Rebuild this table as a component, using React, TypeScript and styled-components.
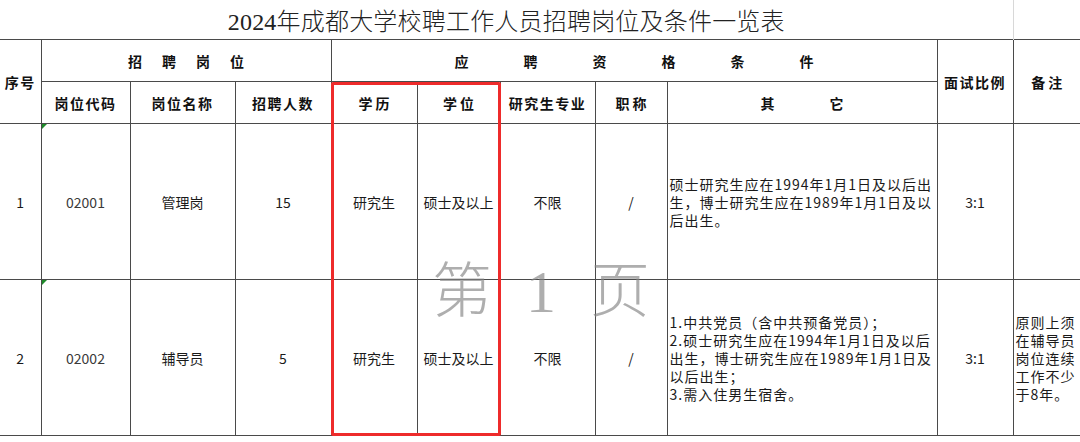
import styled, {createGlobalStyle} from 'styled-components'

const GlobalStyle = createGlobalStyle`
  html, body {
    margin: 0;
    background: #fff;
  }
  body {
    font-family: 'Noto Sans CJK SC', 'Liberation Sans', sans-serif;
    color: #1a1a1a;
  }
`

const LINE = '#4a4a4a'

export const Sheet = styled.div`
  position: relative;
  width: 1080px;
  height: 442px;
  overflow: hidden;
`

export const Grid = styled.table`
  width: 1080px;
  border-collapse: collapse;
  table-layout: fixed;
`

export const TitleCell = styled.td`
  height: 39px;
  padding: 0;
  text-align: center;
  vertical-align: middle;
  font-family: 'Liberation Serif', 'Noto Sans CJK SC', serif;
  font-size: 24px;
  font-weight: 300;
  color: #222;
  letter-spacing: 0.2px;
`

export const TitleSpare = styled.td`
  border-left: 1px solid #d8d8d8;
  padding: 0;
`

export const HeadCell = styled.th<{$spread?: number}>`
  height: 41px;
  padding: 0;
  border: 1px solid ${LINE};
  font-size: 14px;
  font-weight: 700;
  color: #111;
  text-align: center;
  vertical-align: middle;
  letter-spacing: ${p => (p.$spread ?? 1.5)}px;
  text-indent: ${p => (p.$spread ?? 0)}px;
  white-space: nowrap;
  &:first-child {
    border-left: none;
  }
  &:last-child {
    border-right: none;
  }
`

export const BodyCell = styled.td<{$tone?: string}>`
  position: relative;
  height: 155px;
  padding: 0;
  border: 1px solid ${LINE};
  font-size: 14px;
  color: ${p => p.$tone ?? '#1a1a1a'};
  text-align: center;
  vertical-align: middle;
  white-space: nowrap;
  &:first-child {
    border-left: none;
  }
  &:last-child {
    border-right: none;
  }
`

export const TextBlock = styled.div`
  text-align: left;
  padding-left: 2px;
  font-size: 14px;
  line-height: 18px;
  letter-spacing: 1px;
`

export const NoteMark = styled.span`
  position: absolute;
  top: 0;
  left: 0;
  width: 0;
  height: 0;
  border-top: 5px solid #1f8a2a;
  border-right: 5px solid transparent;
`

export const Highlight = styled.div`
  position: absolute;
  left: 331px;
  top: 82px;
  width: 164px;
  height: 348px;
  border: 3px solid #ee2b2b;
  border-radius: 2px;
  pointer-events: none;
`

export const Watermark = styled.div`
  position: absolute;
  left: 432px;
  top: 254px;
  display: flex;
  align-items: center;
  gap: 34px;
  font-family: 'Liberation Serif', 'Noto Sans CJK SC', serif;
  font-size: 60px;
  font-weight: 300;
  line-height: 76px;
  color: rgba(130, 130, 130, 0.65);
  pointer-events: none;
`

const widths = [41, 89, 105, 96, 86, 83, 95, 72, 270, 76, 67]

type Row = {
  no: string
  code: string
  name: string
  count: string
  edu: string
  degree: string
  major: string
  title: string
  other: string[]
  ratio: string
  note: string[]
}

const rows: Row[] = [
  {
    no: '1',
    code: '02001',
    name: '管理岗',
    count: '15',
    edu: '研究生',
    degree: '硕士及以上',
    major: '不限',
    title: '/',
    other: ['硕士研究生应在1994年1月1日及以后出', '生，博士研究生应在1989年1月1日及以', '后出生。'],
    ratio: '3:1',
    note: [],
  },
  {
    no: '2',
    code: '02002',
    name: '辅导员',
    count: '5',
    edu: '研究生',
    degree: '硕士及以上',
    major: '不限',
    title: '/',
    other: [
      '1.中共党员（含中共预备党员）；',
      '2.硕士研究生应在1994年1月1日及以后',
      '出生，博士研究生应在1989年1月1日及',
      '以后出生；',
      '3.需入住男生宿舍。',
    ],
    ratio: '3:1',
    note: ['原则上须', '在辅导员', '岗位连续', '工作不少', '于8年。'],
  },
]

export default function App() {
  return (
    <Sheet>
      <GlobalStyle />
      <Grid>
        <colgroup>
          {widths.map((w, i) => (
            <col key={i} style={{width: w}} />
          ))}
        </colgroup>
        <tbody>
          <tr>
            <TitleCell colSpan={10}>2024年成都大学校聘工作人员招聘岗位及条件一览表</TitleCell>
            <TitleSpare />
          </tr>
          <tr>
            <HeadCell rowSpan={2}>序号</HeadCell>
            <HeadCell colSpan={3} $spread={20}>招聘岗位</HeadCell>
            <HeadCell colSpan={5} $spread={55}>应聘资格条件</HeadCell>
            <HeadCell rowSpan={2}>面试比例</HeadCell>
            <HeadCell rowSpan={2} $spread={3}>备注</HeadCell>
          </tr>
          <tr>
            <HeadCell>岗位代码</HeadCell>
            <HeadCell>岗位名称</HeadCell>
            <HeadCell>招聘人数</HeadCell>
            <HeadCell $spread={3}>学历</HeadCell>
            <HeadCell $spread={3}>学位</HeadCell>
            <HeadCell>研究生专业</HeadCell>
            <HeadCell $spread={3}>职称</HeadCell>
            <HeadCell $spread={55}>其它</HeadCell>
          </tr>
          {rows.map(r => (
            <tr key={r.no}>
              <BodyCell>{r.no}</BodyCell>
              <BodyCell $tone="#3a3a3a">
                <NoteMark />
                {r.code}
              </BodyCell>
              <BodyCell>{r.name}</BodyCell>
              <BodyCell>{r.count}</BodyCell>
              <BodyCell>{r.edu}</BodyCell>
              <BodyCell>{r.degree}</BodyCell>
              <BodyCell>{r.major}</BodyCell>
              <BodyCell>{r.title}</BodyCell>
              <BodyCell>
                <TextBlock>
                  {r.other.map((l, i) => (
                    <div key={i}>{l}</div>
                  ))}
                </TextBlock>
              </BodyCell>
              <BodyCell>{r.ratio}</BodyCell>
              <BodyCell>
                <TextBlock>
                  {r.note.map((l, i) => (
                    <div key={i}>{l}</div>
                  ))}
                </TextBlock>
              </BodyCell>
            </tr>
          ))}
        </tbody>
      </Grid>
      <Highlight />
      <Watermark>
        <span>第</span>
        <span>1</span>
        <span>页</span>
      </Watermark>
    </Sheet>
  )
}
